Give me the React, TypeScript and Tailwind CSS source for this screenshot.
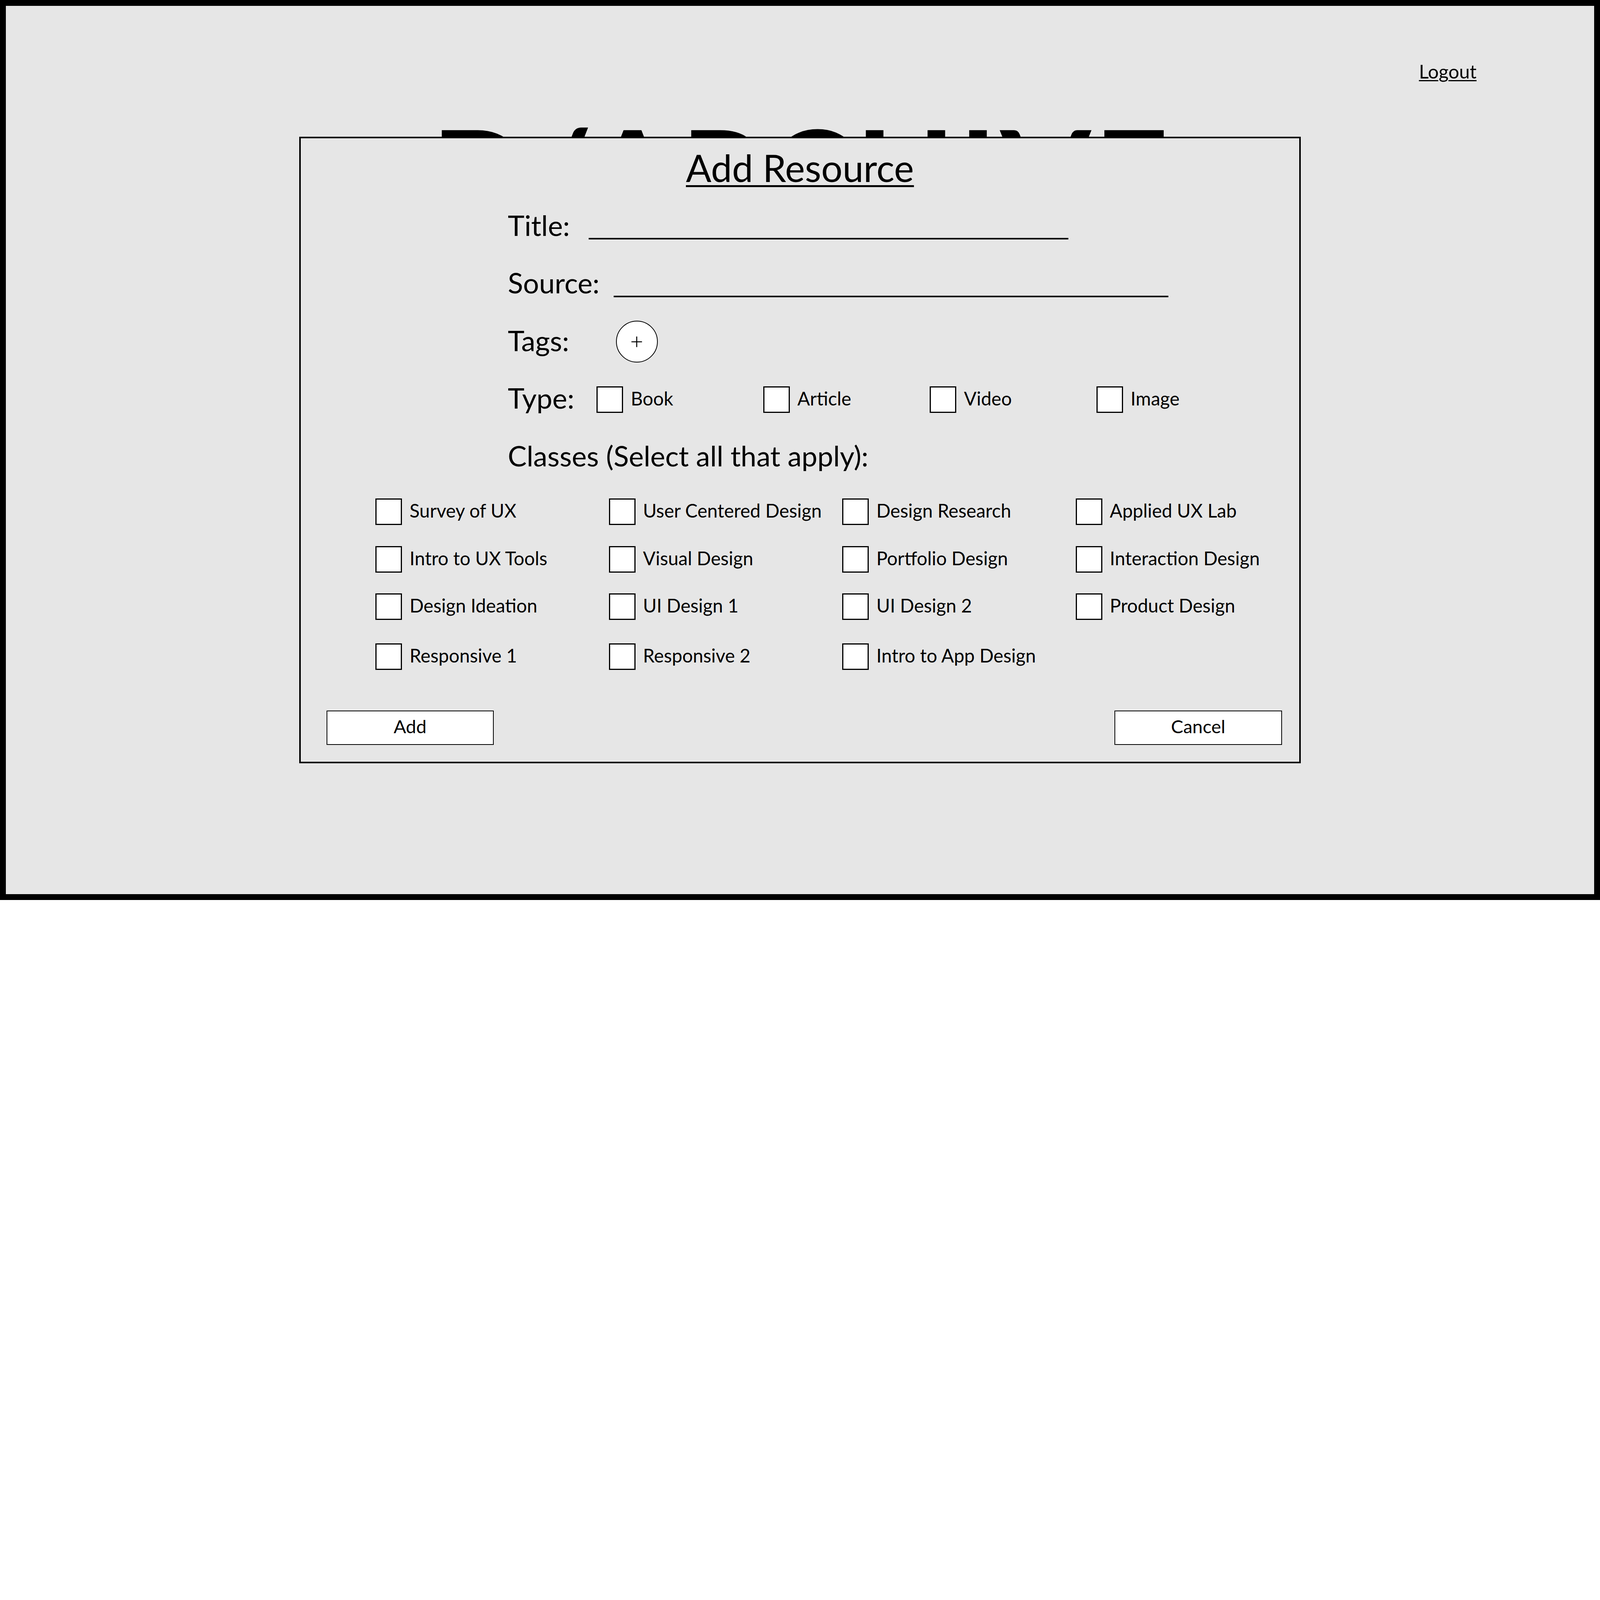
import React from 'react';

const typeOptions = ['Book', 'Article', 'Video', 'Image'];

const classRows = [
    { height: 'h-[122px]', items: ['Survey of UX', 'User Centered Design', 'Design Research', 'Applied UX Lab'] },
    { height: 'h-[121.3px]', items: ['Intro to UX Tools', 'Visual Design', 'Portfolio Design', 'Interaction Design'] },
    { height: 'h-[128px]', items: ['Design Ideation', 'UI Design 1', 'UI Design 2', 'Product Design'] },
    { height: 'h-[68px]', items: ['Responsive 1', 'Responsive 2', 'Intro to App Design'] },
];

const Checkbox: React.FC<{ label: string }> = ({ label }) => (
    <div className="flex items-start">
        <div className="h-[68px] w-[68px] shrink-0 border-[3.6px] border-black bg-white" />
        <span className="ml-[19.5px] mt-[7.2px] whitespace-nowrap text-[47.6px] leading-none">{label}</span>
    </div>
);

const App: React.FC = () => {
    return (
        <div className="h-[2304px] w-[4096px] overflow-hidden border-[15px] border-black bg-[#e6e6e6] font-[family-name:Lato,sans-serif] text-black">
            <div className="relative h-full">
                {/* header */}
                <div className="flex justify-end pr-[301px] pt-[143.4px]">
                    <a className="text-[48.6px] leading-none underline decoration-[2.6px] underline-offset-[4px]">Logout</a>
                </div>
                <div className="mt-[71.7px] pl-[8px] text-center text-[333px] font-bold leading-none tracking-[8px]">D/ARCHIVE</div>

                {/* add resource modal */}
                <div className="absolute left-[751px] top-[334.8px] flex h-[1604px] w-[2563.6px] flex-col border-[4px] border-black bg-[#e6e6e6]">
                    <h1 className="mt-[27.6px] text-center text-[96.3px] leading-none underline decoration-[4.6px] underline-offset-[7.7px]">
                        Add Resource
                    </h1>

                    <div className="mt-[62px] pl-[530px]">
                        <div className="flex h-[147.5px] items-start">
                            <span className="w-[207.4px] shrink-0 text-[72.2px] leading-none">Title:</span>
                            <div className="mt-[69.6px] h-[3.6px] w-[1227.8px] bg-black" />
                        </div>
                        <div className="flex h-[147.5px] items-start">
                            <span className="w-[271.4px] shrink-0 text-[72.2px] leading-none">Source:</span>
                            <div className="mt-[69.6px] h-[4px] w-[1419.8px] bg-black" />
                        </div>
                        <div className="flex h-[147.5px] items-start">
                            <span className="w-[277px] shrink-0 text-[72.2px] leading-none">Tags:</span>
                            <button className="-mt-[13.3px] flex h-[106.5px] w-[106.5px] items-center justify-center rounded-full border-[2px] border-black bg-white">
                                <svg width="28" height="28" viewBox="0 0 28 28">
                                    <path d="M14 0.5v27M0.5 14h27" stroke="black" strokeWidth="2.6" fill="none" />
                                </svg>
                            </button>
                        </div>
                        <div className="flex h-[147.5px] items-start">
                            <span className="w-[227.3px] shrink-0 text-[72.2px] leading-none">Type:</span>
                            {typeOptions.map(option => (
                                <div key={option} className="mt-[6.7px] w-[426.5px] shrink-0">
                                    <Checkbox label={option} />
                                </div>
                            ))}
                        </div>
                        <div className="text-[72.2px] leading-none">Classes (Select all that apply):</div>
                    </div>

                    <div className="mt-[73.7px] pl-[191px]">
                        {classRows.map((row, i) => (
                            <div key={i} className={`grid grid-cols-[597.5px_597.5px_597.5px_1fr] items-start ${row.height}`}>
                                {row.items.map(item => (
                                    <Checkbox key={item} label={item} />
                                ))}
                            </div>
                        ))}
                    </div>

                    <div className="mt-auto flex justify-between pb-[43px] pl-[65.5px] pr-[44px]">
                        <button className="flex h-[87.6px] w-[428.5px] items-center justify-center border-[2px] border-black bg-white pb-[6px] text-[47.1px] leading-none">
                            Add
                        </button>
                        <button className="flex h-[87.6px] w-[428.5px] items-center justify-center border-[2px] border-black bg-white pb-[6px] text-[47.1px] leading-none">
                            Cancel
                        </button>
                    </div>
                </div>
            </div>
        </div>
    );
};

export default App;
